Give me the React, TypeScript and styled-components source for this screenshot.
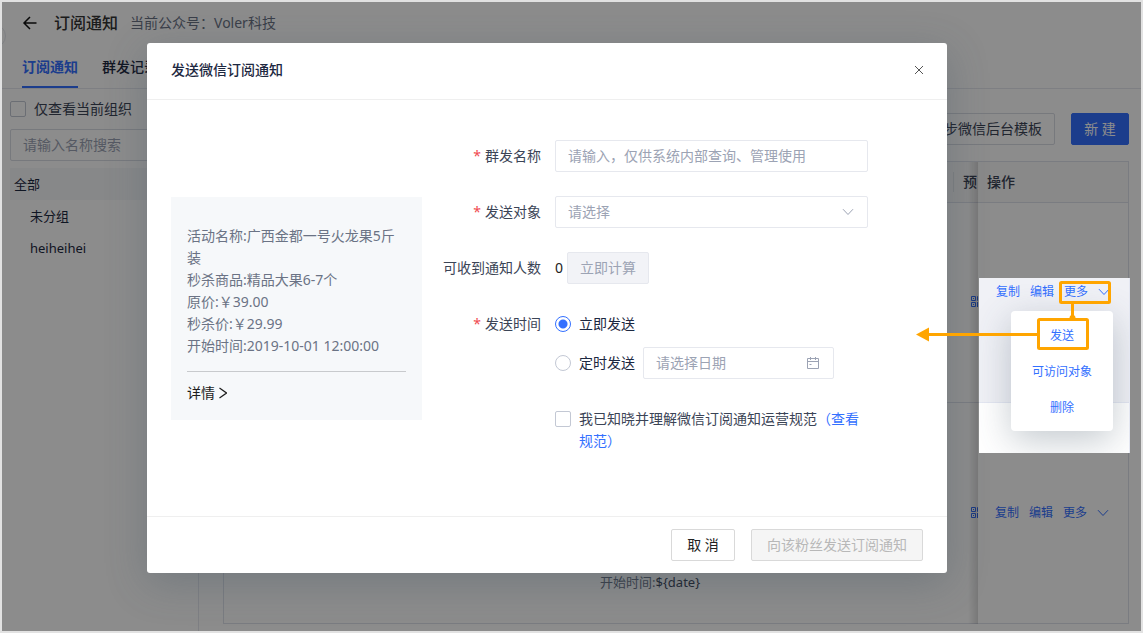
import React from "react";
import styled, { createGlobalStyle } from "styled-components";

const c = {
  blue: "#3370ff",
  ink: "#1d2841",
  text: "#3b4456",
  muted: "#6b7385",
  hint: "#9ca3b4",
  line: "#e6e8ee",
  orange: "#ffa500",
};

const GlobalStyle = createGlobalStyle`
  *, *::before, *::after { box-sizing: border-box; }
  body { margin: 0; background: #e2e2e2; }
  body, button, input, select {
    font-family: "Noto Sans", "Noto Sans CJK SC", sans-serif;
    font-size: 14px;
    line-height: 22px;
    color: ${c.text};
  }
  button, input, select { margin: 0; }
`;

const Frame = styled.div`
  position: relative;
  display: flex;
  flex-direction: column;
  min-height: 100vh;
  border: 2px solid #e2e2e2;
  background: #fff;
  overflow: hidden;
`;

/* Page behind the dialog */

const PageHeader = styled.header`
  display: flex;
  align-items: center;
  height: 42px;
  padding-left: 20px;
`;

const BackButton = styled.button`
  display: flex;
  padding: 0;
  border: 0;
  background: none;
  color: #111;
`;

const PageTitle = styled.h1`
  margin: 0 12px 0 16px;
  font-size: 16px;
  font-weight: 500;
  color: #333;
`;

const Account = styled.span`
  color: ${c.muted};
`;

const CollapseHandle = styled.span`
  position: absolute;
  top: 22px;
  left: -20px;
  width: 24px;
  height: 24px;
  border: 1px solid ${c.line};
  border-radius: 50%;
`;

const Tabs = styled.nav`
  display: flex;
  gap: 24px;
  height: 45px;
  padding-left: 20px;
  border-bottom: 1px solid ${c.line};
`;

const Tab = styled.a<{ $active?: boolean }>`
  display: flex;
  align-items: center;
  padding-top: 4px;
  border-bottom: 2px solid ${(p) => (p.$active ? c.blue : "transparent")};
  color: ${(p) => (p.$active ? c.blue : c.ink)};
  font-weight: ${(p) => (p.$active ? 700 : 500)};
  text-decoration: none;
`;

const Content = styled.div`
  display: flex;
  flex: 1;
`;

const Sidebar = styled.aside`
  flex: 0 0 197px;
  padding: 9px 8px;
  border-right: 1px solid ${c.line};
`;

const CheckLabel = styled.label`
  display: flex;
  align-items: flex-start;
  gap: 8px;
  color: ${c.text};
`;

const Checkbox = styled.input.attrs({ type: "checkbox" })`
  appearance: none;
  flex: none;
  width: 16px;
  height: 16px;
  margin: 3px 0;
  border: 1px solid #c3c8d4;
  border-radius: 2px;
  background: #fff;
`;

const TextInput = styled.input`
  display: block;
  width: 100%;
  height: 32px;
  padding: 0 12px 2px;
  border: 1px solid ${c.line};
  border-radius: 2px;
  background: #fff;
  &::placeholder {
    color: ${c.hint};
    opacity: 1;
  }
`;

const SearchInput = styled(TextInput)`
  margin: 9px 0 7px;
  border-color: #d9dce4;
`;

const GroupList = styled.ul`
  margin: 0;
  padding: 0;
  list-style: none;
`;

const GroupItem = styled.li<{ $active?: boolean; $child?: boolean }>`
  padding: 5px 4px 5px ${(p) => (p.$child ? 20 : 4)}px;
  background: ${(p) => (p.$active ? "#f6f7f9" : "none")};
  color: ${c.ink};
  font-size: 13px;
`;

const Main = styled.main`
  flex: 1;
  min-width: 0;
  padding: 24px 12px 7px 24px;
`;

const Toolbar = styled.div`
  display: flex;
  justify-content: flex-end;
  gap: 16px;
  margin-bottom: 16px;
`;

type ButtonKind = "default" | "primary" | "soft" | "disabled";

const buttonColors: Record<ButtonKind, string> = {
  default: `background: #fff; border-color: #d9dce4; color: ${c.text};`,
  primary: `background: ${c.blue}; border-color: ${c.blue}; color: #fff;`,
  soft: `background: #f2f3f7; border-color: ${c.line}; color: ${c.hint};`,
  disabled: `background: #f5f5f5; border-color: #d9d9d9; color: #b8b8b8;`,
};

const Button = styled.button.attrs({ type: "button" })<{ $kind?: ButtonKind; $wide?: boolean }>`
  min-width: ${(p) => (p.$wide ? 64 : 58)}px;
  height: 32px;
  padding: 0 ${(p) => (p.$wide ? 15 : 12)}px 1px;
  border: 1px solid;
  border-radius: 2px;
  white-space: nowrap;
  ${(p) => buttonColors[p.$kind ?? "default"]}
`;

const DataTable = styled.table`
  width: 100%;
  table-layout: fixed;
  border-collapse: separate;
  border-spacing: 0;
  border: solid #dfe2ec;
  border-width: 1px 1px 0;
`;

const HeadCell = styled.th`
  height: 41px;
  padding: 0 0 0 9px;
  border-bottom: 1px solid #dfe2ec;
  background: #fafafa;
  text-align: left;
  font-weight: 500;
  white-space: nowrap;
`;

const PreviewHead = styled(HeadCell)`
  padding-left: 10px;
  background: linear-gradient(#e4e6ec, #e4e6ec) left center / 1px 20px no-repeat #fafafa;
`;

const BodyRow = styled.tr<{ $height: number }>`
  height: ${(p) => p.$height}px;
`;

const Cell = styled.td`
  padding: 0;
  border-bottom: 1px solid #dfe2ec;
`;

const ContentCell = styled(Cell)`
  padding: 0 16px 30px;
  vertical-align: bottom;
  color: ${c.muted};
  font-size: 13px;
`;

const Variable = styled.span`
  color: ${c.text};
`;

const PreviewCell = styled(Cell)`
  padding: 0 0 2px 18px;
  overflow: hidden;
`;

const edgeShadow = `
  position: relative;
  &::before {
    content: "";
    position: absolute;
    top: 0;
    bottom: -1px;
    left: -10px;
    width: 10px;
    background: linear-gradient(to left, rgba(0, 0, 0, 0.14), transparent);
  }
`;

const ActionHead = styled(HeadCell)`
  ${edgeShadow}
`;

const ActionCell = styled(Cell)`
  padding-left: 17px;
  ${edgeShadow}
`;

const Actions = styled.div`
  display: flex;
  align-items: center;
  gap: 10px;
`;

const ActionLink = styled.a`
  display: flex;
  align-items: center;
  gap: 10px;
  color: ${c.blue};
  font-size: 12px;
  line-height: 20px;
  text-decoration: none;
  white-space: nowrap;
`;

/* Dialog */

const Mask = styled.div`
  position: absolute;
  inset: 0;
  display: flex;
  align-items: flex-start;
  justify-content: center;
  padding: 41px 49px 0 0;
  background: rgba(0, 0, 0, 0.45);
`;

const Dialog = styled.section`
  width: 800px;
  max-width: 100%;
  border-radius: 3px;
  background: #fff;
  box-shadow: 0 10px 40px rgba(60, 80, 95, 0.3);
`;

const DialogHeader = styled.header`
  display: flex;
  align-items: center;
  justify-content: space-between;
  height: 57px;
  padding: 0 22px 2px 24px;
  border-bottom: 1px solid #efefef;
`;

const DialogTitle = styled.h2`
  margin: 0;
  font-size: 14px;
  font-weight: 500;
  color: ${c.ink};
`;

const CloseButton = styled.button`
  display: flex;
  padding: 0;
  border: 0;
  background: none;
  color: #555;
`;

const DialogBody = styled.div`
  display: grid;
  grid-template-columns: 251px 1fr;
  align-items: center;
  min-height: 416px;
  padding: 40px 24px;
`;

const PreviewCard = styled.article`
  padding: 28px 16px 16px;
  background: #f6f8fa;
  color: ${c.muted};
`;

const PreviewLine = styled.p`
  margin: 0;
`;

const DetailLink = styled.a`
  display: flex;
  align-items: center;
  gap: 4px;
  margin-top: 14px;
  padding-top: 10px;
  border-top: 1px solid #c8cacd;
  color: #1c1c1c;
  text-decoration: none;
`;

const Form = styled.form`
  display: flex;
  flex-direction: column;
  gap: 24px;
  align-self: start;
  padding-right: 55px;
`;

const FormRow = styled.div`
  display: grid;
  grid-template-columns: 119px 1fr;
  gap: 14px;
`;

const FormLabel = styled.label<{ $required?: boolean }>`
  padding: 5px 0;
  text-align: right;
  white-space: nowrap;
  &::before {
    content: ${(p) => (p.$required ? '"*"' : "none")};
    margin-right: 4px;
    color: #f04a50;
  }
`;

const Field = styled.div`
  grid-column: 2;
`;

const Inline = styled.div`
  display: flex;
  align-items: center;
  gap: 4px;
`;

const Count = styled.span`
  color: #222;
`;

const SelectBox = styled.div`
  position: relative;
`;

const Select = styled.select`
  appearance: none;
  display: block;
  width: 100%;
  height: 32px;
  padding: 0 12px;
  border: 1px solid ${c.line};
  border-radius: 2px;
  background: #fff;
  color: ${c.hint};
`;

const FieldIcon = styled.span`
  position: absolute;
  top: 0;
  right: 14px;
  display: flex;
  align-items: center;
  height: 32px;
  color: ${c.hint};
  pointer-events: none;
`;

const DateBox = styled.div`
  position: relative;
  width: 191px;
`;

const RadioGroup = styled.div`
  display: flex;
  flex-direction: column;
  gap: 7px;
`;

const RadioRow = styled.div`
  display: flex;
  align-items: center;
  gap: 8px;
  height: 32px;
`;

const RadioLabel = styled.label`
  display: flex;
  align-items: center;
  gap: 8px;
  color: ${c.ink};
`;

const Radio = styled.input.attrs({ type: "radio" })`
  appearance: none;
  width: 16px;
  height: 16px;
  margin: 0;
  border: 1px solid #c3c8d4;
  border-radius: 50%;
  &:checked {
    border-color: ${c.blue};
    background: radial-gradient(circle, ${c.blue} 4px, #fff 5px);
  }
`;

const TextLink = styled.a`
  color: ${c.blue};
  text-decoration: none;
`;

const AgreeRow = styled(Field)`
  padding-top: 5px;
`;

const DialogFooter = styled.footer`
  display: flex;
  justify-content: flex-end;
  gap: 16px;
  padding: 12px 24px;
  border-top: 1px solid #efefef;
`;

const CancelButton = styled(Button)`
  border-color: #d9d9d9;
  color: #222;
`;

/* Highlighted "more" menu with its annotation */

const Spotlight = styled.div`
  position: absolute;
  top: 276px;
  right: 11px;
  width: 151px;
  height: 175px;
  padding: 4px 0 0 17px;
  border-right: 1px solid #e4e7f2;
  background: linear-gradient(#f0f1f6 124px, #e4e7f2 124px, #e4e7f2 125px, #fff 125px);
`;

const Menu = styled.ul`
  position: absolute;
  top: 33px;
  left: 32px;
  width: 102px;
  margin: 0;
  padding: 7px 0 5px;
  border-radius: 4px;
  background: #fff;
  box-shadow: 0 10px 36px rgba(60, 80, 95, 0.3);
  list-style: none;
`;

const SpotlightClip = styled.div`
  position: absolute;
  inset: 0;
  overflow: hidden;
`;

const MenuItem = styled.li`
  display: flex;
  justify-content: center;
  padding: 8px 0;
`;

const Annotation = styled.svg`
  position: absolute;
  top: 0;
  left: -65px;
`;

const IconBlock = styled.svg`
  display: block;
`;

const Chevron = () => (
  <svg width="12" height="8" viewBox="0 0 12 8" fill="none" stroke="currentColor" aria-hidden="true">
    <path d="M1 1.2 6 6.5 11 1.2" />
  </svg>
);

const QrIcon = () => (
  <IconBlock width="11" height="11" viewBox="0 0 11 11" fill="none" stroke={c.blue} aria-hidden="true">
    <path d="M.5.5h4v4h-4zM6.5.5h4v4h-4zM.5 6.5h4v4h-4zM6.5 6v5M8.5 6v2M10.5 6v5" />
    <path d="M2 2.5h1M8 2.5h1M2 8.5h1" />
  </IconBlock>
);

const RowActions = () => (
  <Actions>
    <ActionLink href="#copy">复制</ActionLink>
    <ActionLink href="#edit">编辑</ActionLink>
    <ActionLink href="#more">
      更多
      <Chevron />
    </ActionLink>
  </Actions>
);

const previewLines = [
  "活动名称:广西金都一号火龙果5斤装",
  "秒杀商品:精品大果6-7个",
  "原价:￥39.00",
  "秒杀价:￥29.99",
  "开始时间:2019-10-01 12:00:00",
];

export default function App() {
  return (
    <Frame>
      <GlobalStyle />
      <CollapseHandle />
      <PageHeader>
        <BackButton type="button" aria-label="返回">
          <svg width="16" height="16" viewBox="0 0 16 16" fill="none" stroke="currentColor" strokeWidth="1.5" aria-hidden="true">
            <path d="M14.5 8H2M8 2 2 8l6 6" />
          </svg>
        </BackButton>
        <PageTitle>订阅通知</PageTitle>
        <Account>当前公众号：Voler科技</Account>
      </PageHeader>
      <Tabs>
        <Tab href="#notice" $active>订阅通知</Tab>
        <Tab href="#records">群发记录</Tab>
      </Tabs>
      <Content>
        <Sidebar>
          <CheckLabel>
            <Checkbox />
            仅查看当前组织
          </CheckLabel>
          <SearchInput placeholder="请输入名称搜索" aria-label="请输入名称搜索" />
          <GroupList>
            <GroupItem $active>全部</GroupItem>
            <GroupItem $child>未分组</GroupItem>
            <GroupItem $child>heiheihei</GroupItem>
          </GroupList>
        </Sidebar>
        <Main>
          <Toolbar>
            <Button>同步微信后台模板</Button>
            <Button $kind="primary">新 建</Button>
          </Toolbar>
          <DataTable>
            <colgroup>
              <col style={{ width: 360 }} />
              <col />
              <col style={{ width: 25 }} />
              <col style={{ width: 150 }} />
            </colgroup>
            <thead>
              <tr>
                <HeadCell />
                <HeadCell />
                <PreviewHead>预</PreviewHead>
                <ActionHead>操作</ActionHead>
              </tr>
            </thead>
            <tbody>
              <BodyRow $height={200}>
                <Cell />
                <ContentCell />
                <PreviewCell><QrIcon /></PreviewCell>
                <ActionCell />
              </BodyRow>
              <BodyRow $height={221}>
                <Cell />
                <ContentCell>开始时间:<Variable>{"${date}"}</Variable></ContentCell>
                <PreviewCell><QrIcon /></PreviewCell>
                <ActionCell><RowActions /></ActionCell>
              </BodyRow>
            </tbody>
          </DataTable>
        </Main>
      </Content>

      <Mask>
        <Dialog role="dialog" aria-labelledby="dialog-title">
          <DialogHeader>
            <DialogTitle id="dialog-title">发送微信订阅通知</DialogTitle>
            <CloseButton type="button" aria-label="关闭">
              <svg width="12" height="12" viewBox="0 0 12 12" fill="none" stroke="currentColor" aria-hidden="true">
                <path d="m2 2 8 8M10 2l-8 8" />
              </svg>
            </CloseButton>
          </DialogHeader>
          <DialogBody>
            <PreviewCard>
              {previewLines.map((line) => (
                <PreviewLine key={line}>{line}</PreviewLine>
              ))}
              <DetailLink href="#detail">
                详情
                <svg width="8" height="12" viewBox="0 0 8 12" fill="none" stroke="currentColor" strokeWidth="1.2" aria-hidden="true">
                  <path d="m.5 1 7 5-7 5" />
                </svg>
              </DetailLink>
            </PreviewCard>
            <Form>
              <FormRow>
                <FormLabel htmlFor="name" $required>群发名称</FormLabel>
                <TextInput id="name" placeholder="请输入，仅供系统内部查询、管理使用" />
              </FormRow>
              <FormRow>
                <FormLabel htmlFor="target" $required>发送对象</FormLabel>
                <SelectBox>
                  <Select id="target" defaultValue="">
                    <option value="">请选择</option>
                  </Select>
                  <FieldIcon><Chevron /></FieldIcon>
                </SelectBox>
              </FormRow>
              <FormRow>
                <FormLabel as="span">可收到通知人数</FormLabel>
                <Inline>
                  <Count>0</Count>
                  <Button $kind="soft">立即计算</Button>
                </Inline>
              </FormRow>
              <FormRow>
                <FormLabel as="span" $required>发送时间</FormLabel>
                <RadioGroup>
                  <RadioRow>
                    <RadioLabel>
                      <Radio name="time" defaultChecked />
                      立即发送
                    </RadioLabel>
                  </RadioRow>
                  <RadioRow>
                    <RadioLabel>
                      <Radio name="time" />
                      定时发送
                    </RadioLabel>
                    <DateBox>
                      <TextInput placeholder="请选择日期" aria-label="请选择日期" />
                      <FieldIcon>
                        <svg width="14" height="14" viewBox="0 0 14 14" fill="none" stroke="currentColor" aria-hidden="true">
                          <path d="M1.5 2.5h11v10h-11zM1.5 5.5h11M4.5 1v3M9.5 1v3M3.5 8.5h2" />
                        </svg>
                      </FieldIcon>
                    </DateBox>
                  </RadioRow>
                </RadioGroup>
              </FormRow>
              <FormRow>
                <AgreeRow>
                  <CheckLabel>
                    <Checkbox />
                    <span>
                      我已知晓并理解微信订阅通知运营规范<TextLink href="#rules">（查看规范）</TextLink>
                    </span>
                  </CheckLabel>
                </AgreeRow>
              </FormRow>
            </Form>
          </DialogBody>
          <DialogFooter>
            <CancelButton $wide>取 消</CancelButton>
            <Button $kind="disabled" $wide disabled>向该粉丝发送订阅通知</Button>
          </DialogFooter>
        </Dialog>
      </Mask>

      <Spotlight>
        <SpotlightClip>
          <Menu>
            <MenuItem><ActionLink href="#send">发送</ActionLink></MenuItem>
            <MenuItem><ActionLink href="#visible">可访问对象</ActionLink></MenuItem>
            <MenuItem><ActionLink href="#delete">删除</ActionLink></MenuItem>
          </Menu>
        </SpotlightClip>
        <RowActions />
        <Annotation width="200" height="80" viewBox="0 0 200 80" fill="none" stroke={c.orange} strokeWidth="3" aria-hidden="true">
          <rect x="146.5" y="4.5" width="49" height="20" rx="1" />
          <rect x="124.5" y="41.5" width="49" height="29" rx="1" />
          <path d="M158.5 26v14M14 56.5h109" />
          <circle cx="158.5" cy="40" r="3" fill={c.orange} stroke="none" />
          <path d="M2 56.5 15 49.5v14z" fill={c.orange} stroke="none" />
        </Annotation>
      </Spotlight>
    </Frame>
  );
}
